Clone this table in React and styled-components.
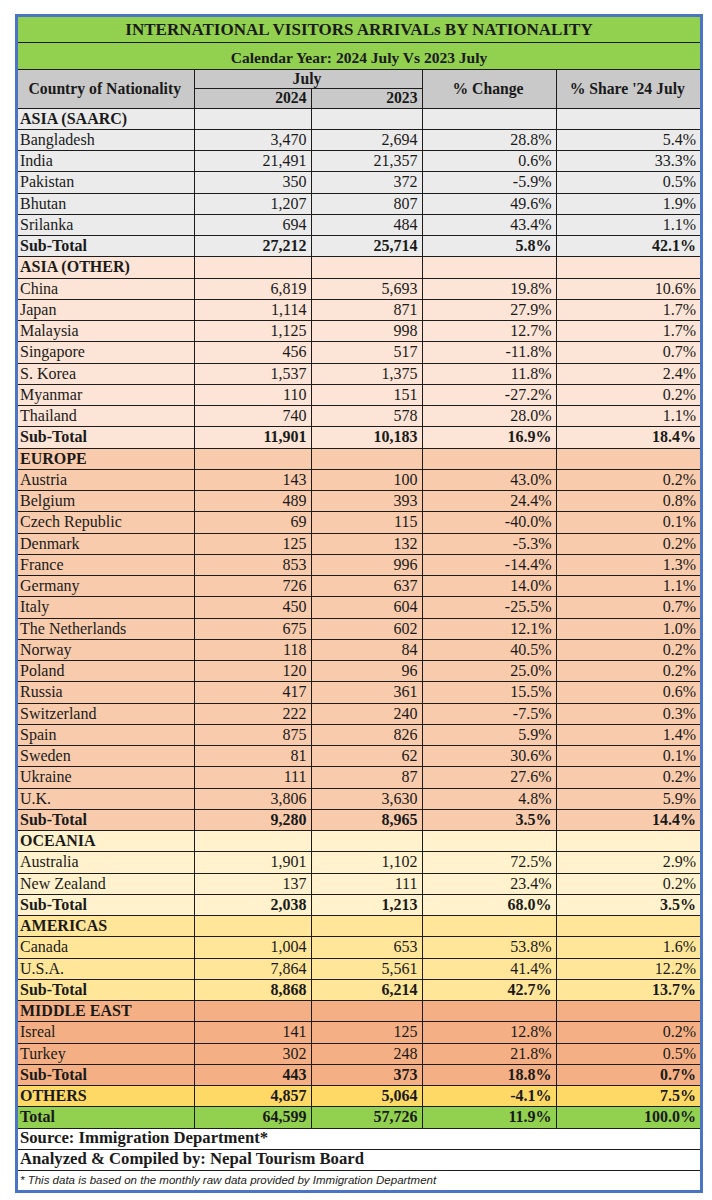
import React from 'react';
import styled, { createGlobalStyle } from 'styled-components';

const GlobalStyle = createGlobalStyle`
  html, body {
    margin: 0;
    padding: 0;
    background: #ffffff;
  }
  body {
    font-family: "Liberation Serif", "Times New Roman", serif;
    color: #1a1a1a;
  }
`;

// section colours, as in the Excel sheet
const tones = {
  saarc: '#ebebeb',
  asia: '#fce4d6',
  europe: '#f8cbad',
  oceania: '#fff2cc',
  americas: '#ffe699',
  middle: '#f4b084',
  others: '#ffd966',
  total: '#92d050',
  head: '#c9c9c9',
  white: '#ffffff',
};

const sections = [
  {
    name: 'ASIA (SAARC)',
    tone: 'saarc',
    rows: [
      ['Bangladesh', '3,470', '2,694', '28.8%', '5.4%'],
      ['India', '21,491', '21,357', '0.6%', '33.3%'],
      ['Pakistan', '350', '372', '-5.9%', '0.5%'],
      ['Bhutan', '1,207', '807', '49.6%', '1.9%'],
      ['Srilanka', '694', '484', '43.4%', '1.1%'],
    ],
    total: ['Sub-Total', '27,212', '25,714', '5.8%', '42.1%'],
  },
  {
    name: 'ASIA (OTHER)',
    tone: 'asia',
    rows: [
      ['China', '6,819', '5,693', '19.8%', '10.6%'],
      ['Japan', '1,114', '871', '27.9%', '1.7%'],
      ['Malaysia', '1,125', '998', '12.7%', '1.7%'],
      ['Singapore', '456', '517', '-11.8%', '0.7%'],
      ['S. Korea', '1,537', '1,375', '11.8%', '2.4%'],
      ['Myanmar', '110', '151', '-27.2%', '0.2%'],
      ['Thailand', '740', '578', '28.0%', '1.1%'],
    ],
    total: ['Sub-Total', '11,901', '10,183', '16.9%', '18.4%'],
  },
  {
    name: 'EUROPE',
    tone: 'europe',
    rows: [
      ['Austria', '143', '100', '43.0%', '0.2%'],
      ['Belgium', '489', '393', '24.4%', '0.8%'],
      ['Czech Republic', '69', '115', '-40.0%', '0.1%'],
      ['Denmark', '125', '132', '-5.3%', '0.2%'],
      ['France', '853', '996', '-14.4%', '1.3%'],
      ['Germany', '726', '637', '14.0%', '1.1%'],
      ['Italy', '450', '604', '-25.5%', '0.7%'],
      ['The Netherlands', '675', '602', '12.1%', '1.0%'],
      ['Norway', '118', '84', '40.5%', '0.2%'],
      ['Poland', '120', '96', '25.0%', '0.2%'],
      ['Russia', '417', '361', '15.5%', '0.6%'],
      ['Switzerland', '222', '240', '-7.5%', '0.3%'],
      ['Spain', '875', '826', '5.9%', '1.4%'],
      ['Sweden', '81', '62', '30.6%', '0.1%'],
      ['Ukraine', '111', '87', '27.6%', '0.2%'],
      ['U.K.', '3,806', '3,630', '4.8%', '5.9%'],
    ],
    total: ['Sub-Total', '9,280', '8,965', '3.5%', '14.4%'],
  },
  {
    name: 'OCEANIA',
    tone: 'oceania',
    rows: [
      ['Australia', '1,901', '1,102', '72.5%', '2.9%'],
      ['New Zealand', '137', '111', '23.4%', '0.2%'],
    ],
    total: ['Sub-Total', '2,038', '1,213', '68.0%', '3.5%'],
  },
  {
    name: 'AMERICAS',
    tone: 'americas',
    rows: [
      ['Canada', '1,004', '653', '53.8%', '1.6%'],
      ['U.S.A.', '7,864', '5,561', '41.4%', '12.2%'],
    ],
    total: ['Sub-Total', '8,868', '6,214', '42.7%', '13.7%'],
  },
  {
    name: 'MIDDLE EAST',
    tone: 'middle',
    rows: [
      ['Isreal', '141', '125', '12.8%', '0.2%'],
      ['Turkey', '302', '248', '21.8%', '0.5%'],
    ],
    total: ['Sub-Total', '443', '373', '18.8%', '0.7%'],
  },
];

const Page = styled.div`
  padding: 14px 9px 8px 15px;
`;

const Frame = styled.div`
  width: 682px;
  border: 3px solid #4a74c4;
`;

const Table = styled.table`
  width: 682px;
  table-layout: fixed;
  border-collapse: collapse;
  font-size: 16px;
  line-height: 1;
`;

const Row = styled.tr`
  background: ${(p) => tones[p.$tone]};
  height: ${(p) => p.$h || 21.25}px;
`;

const Cell = styled.td`
  border: 1.5px solid #1c1c1c;
  border-left: ${(p) => (p.$first ? 0 : '1.5px solid #1c1c1c')};
  border-right: ${(p) => (p.$last ? 0 : '1.5px solid #1c1c1c')};
  padding: 0 4px 0 2px;
  text-align: ${(p) => p.$align || 'right'};
  font-weight: ${(p) => (p.$bold ? 700 : 400)};
  white-space: nowrap;
  overflow: hidden;
  vertical-align: middle;
`;

const HeadCell = styled(Cell)`
  background: ${tones.head};
  font-weight: 700;
  font-size: 15.7px;
  text-align: ${(p) => p.$align || 'center'};
`;

const Banner = styled.td`
  background: #92d050;
  border-bottom: 1.5px solid #1c1c1c;
  font-weight: 700;
  font-size: ${(p) => p.$size}px;
  text-align: center;
  vertical-align: ${(p) => p.$valign || 'middle'};
  padding: ${(p) => p.$pad || '0'};
`;

const FootCell = styled.td`
  background: #ffffff;
  border-top: 1.5px solid #1c1c1c;
  font-weight: 700;
  font-size: 16.7px;
  padding: 0 2px;
  text-align: left;
  white-space: nowrap;
`;

const NoteCell = styled(FootCell)`
  font-family: "Liberation Sans", Arial, sans-serif;
  font-style: italic;
  font-weight: 400;
  font-size: 11.5px;
  color: #222;
`;

const DataRow = ({ cells, tone, bold }) => (
  <Row $tone={tone}>
    {cells.map((c, i) => (
      <Cell
        key={i}
        $first={i === 0}
        $last={i === 4}
        $align={i === 0 ? 'left' : 'right'}
        $bold={bold}
      >
        {c}
      </Cell>
    ))}
  </Row>
);

export default function App() {
  return (
    <Page>
      <GlobalStyle />
      <Frame>
        <Table>
          <colgroup>
            <col style={{ width: 176 }} />
            <col style={{ width: 117 }} />
            <col style={{ width: 111 }} />
            <col style={{ width: 134 }} />
            <col style={{ width: 144 }} />
          </colgroup>
          <tbody>
            <Row $tone="total" $h={25}>
              <Banner colSpan={5} $size={17}>
                INTERNATIONAL VISITORS ARRIVALs BY NATIONALITY
              </Banner>
            </Row>
            <Row $tone="total" $h={27}>
              <Banner colSpan={5} $size={15.5} $valign="bottom" $pad="0 0 3px">
                Calendar Year: 2024 July Vs 2023 July
              </Banner>
            </Row>
            <Row $tone="head" $h={19}>
              <HeadCell rowSpan={2} $first>
                Country of Nationality
              </HeadCell>
              <HeadCell colSpan={2}>July</HeadCell>
              <HeadCell rowSpan={2}>% Change</HeadCell>
              <HeadCell rowSpan={2} $last>
                % Share '24 July
              </HeadCell>
            </Row>
            <Row $tone="head" $h={20}>
              <HeadCell $align="right">2024</HeadCell>
              <HeadCell $align="right">2023</HeadCell>
            </Row>
            {sections.map((s) => (
              <React.Fragment key={s.name}>
                <DataRow cells={[s.name, '', '', '', '']} tone={s.tone} bold />
                {s.rows.map((r) => (
                  <DataRow key={r[0]} cells={r} tone={s.tone} />
                ))}
                <DataRow cells={s.total} tone={s.tone} bold />
              </React.Fragment>
            ))}
            <DataRow cells={['OTHERS', '4,857', '5,064', '-4.1%', '7.5%']} tone="others" bold />
            <DataRow cells={['Total', '64,599', '57,726', '11.9%', '100.0%']} tone="total" bold />
            <Row $tone="white" $h={21}>
              <FootCell colSpan={5}>Source: Immigration Department*</FootCell>
            </Row>
            <Row $tone="white" $h={21}>
              <FootCell colSpan={5}>Analyzed &amp; Compiled by: Nepal Tourism Board</FootCell>
            </Row>
            <Row $tone="white" $h={20}>
              <NoteCell colSpan={5}>
                * This data is based on the monthly raw data provided by Immigration Department
              </NoteCell>
            </Row>
          </tbody>
        </Table>
      </Frame>
    </Page>
  );
}
